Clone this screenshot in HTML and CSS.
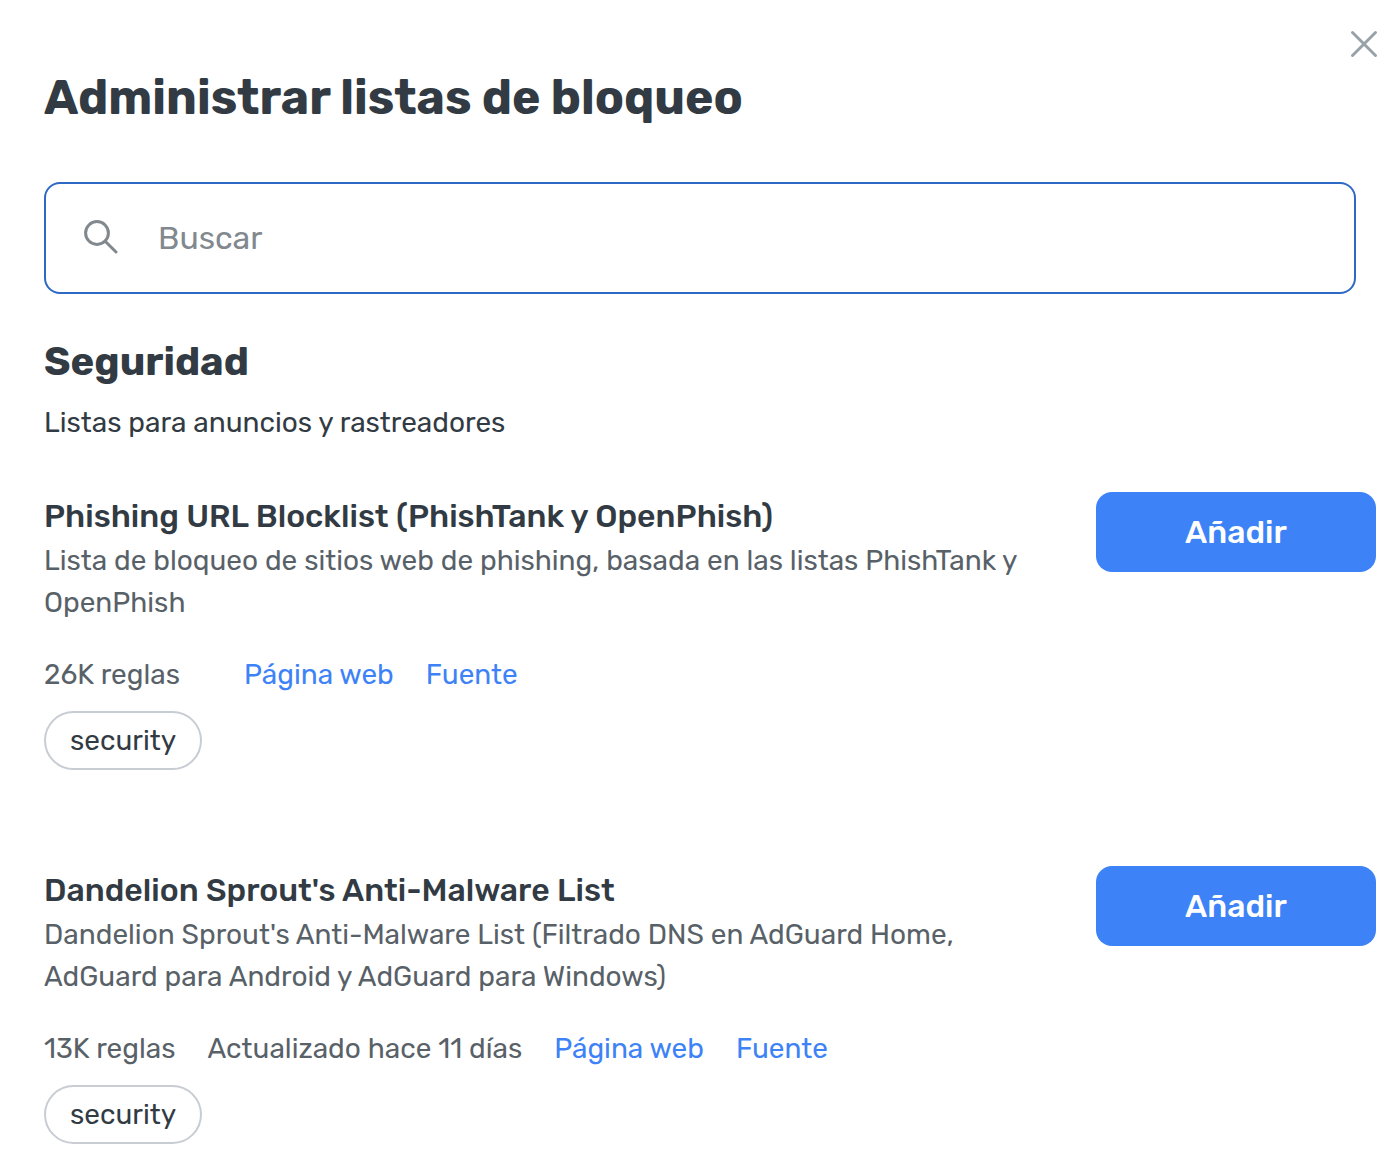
FILE: index.html
```html
<!DOCTYPE html>
<html lang="es">
<head>
    <meta charset="UTF-8">
    <meta name="viewport" content="width=device-width, initial-scale=1.0">
    <title>Administrar listas de bloqueo</title>
    <link rel="stylesheet" href="styles.css">
</head>
<body>
    <main class="modal">
        <button class="close" type="button" aria-label="Cerrar">
            <svg width="28" height="28" viewBox="0 0 28 28" fill="none" stroke="currentColor" stroke-width="3" stroke-linecap="round">
                <path d="M2.5 2.5l23 23M25.5 2.5l-23 23"/>
            </svg>
        </button>

        <h1>Administrar listas de bloqueo</h1>

        <div class="search">
            <svg width="36" height="36" viewBox="0 0 36 36" fill="none" stroke="currentColor" stroke-width="3" stroke-linecap="round">
                <circle cx="15" cy="13" r="11.4"/>
                <path d="M23.2 21.2L34 32"/>
            </svg>
            <input type="text" placeholder="Buscar" aria-label="Buscar">
        </div>

        <h2>Seguridad</h2>
        <p class="group-desc">Listas para anuncios y rastreadores</p>

        <section class="filter">
            <div class="filter-info">
                <h3>Phishing URL Blocklist (PhishTank y OpenPhish)</h3>
                <p class="filter-desc">Lista de bloqueo de sitios web de phishing, basada en las listas PhishTank y OpenPhish</p>
                <div class="filter-meta">
                    <span>26K reglas</span>
                    <span class="updated"></span>
                    <a href="#">Página web</a>
                    <a href="#">Fuente</a>
                </div>
                <span class="tag">security</span>
            </div>
            <button class="add" type="button">Añadir</button>
        </section>

        <section class="filter">
            <div class="filter-info">
                <h3>Dandelion Sprout's Anti-Malware List</h3>
                <p class="filter-desc">Dandelion Sprout's Anti-Malware List (Filtrado DNS en AdGuard Home, AdGuard para Android y AdGuard para Windows)</p>
                <div class="filter-meta">
                    <span>13K reglas</span>
                    <span class="updated">Actualizado hace 11 días</span>
                    <a href="#">Página web</a>
                    <a href="#">Fuente</a>
                </div>
                <span class="tag">security</span>
            </div>
            <button class="add" type="button">Añadir</button>
        </section>
    </main>
</body>
</html>
```
FILE: styles.css
```css
* {
    margin: 0;
    padding: 0;
    box-sizing: border-box;
}

body {
    background: #fff;
    color: #323b43;
    font-family: Rubik, Roboto, sans-serif;
    font-size: 28px;
    line-height: 42px;
}

.modal {
    position: relative;
    padding: 68px 20px 30px 44px;
}

.close {
    position: absolute;
    top: 30px;
    right: 18px;
    width: 28px;
    height: 28px;
    border: none;
    background: none;
    color: #98a2a9;
    cursor: pointer;
}

.close svg {
    display: block;
}

h1 {
    font-size: 48px;
    font-weight: 700;
    line-height: 60px;
    margin-bottom: 54px;
}

.search {
    display: flex;
    align-items: center;
    gap: 40px;
    height: 112px;
    margin-right: 20px;
    padding: 0 36px;
    border: 2px solid #2f69c6;
    border-radius: 16px;
    color: #81898f;
}

.search svg {
    flex-shrink: 0;
}

.search input {
    flex: 1;
    min-width: 0;
    height: 60px;
    border: none;
    outline: none;
    background: none;
    color: #323b43;
    font-family: inherit;
    font-size: 32px;
}

.search input::placeholder {
    color: #81898f;
    opacity: 1;
}

h2 {
    margin-top: 42px;
    font-size: 40px;
    font-weight: 700;
    line-height: 52px;
}

.group-desc {
    margin: 14px 0 48px;
}

.filter {
    display: flex;
    align-items: flex-start;
    justify-content: space-between;
    gap: 72px;
    margin-bottom: 96px;
}

.filter:last-child {
    margin-bottom: 0;
}

.filter-info {
    flex: 1;
    min-width: 0;
}

h3 {
    font-size: 32px;
    font-weight: 500;
    line-height: 48px;
}

.filter-desc {
    color: #586168;
}

.filter-meta {
    display: flex;
    flex-wrap: wrap;
    column-gap: 32px;
    margin: 30px 0 15px;
    color: #586168;
}

.filter-meta a {
    color: #3d82f7;
    text-decoration: none;
}

.filter-meta a:hover {
    text-decoration: underline;
}

.tag {
    display: block;
    width: fit-content;
    padding: 8px 24px;
    border: 2px solid #c8ccd3;
    border-radius: 30px;
    line-height: 39px;
}

.add {
    flex-shrink: 0;
    width: 280px;
    height: 80px;
    border: none;
    border-radius: 16px;
    background: #3d82f7;
    color: #fff;
    font-family: inherit;
    font-size: 32px;
    font-weight: 500;
    cursor: pointer;
}

.add:hover {
    background: #2f69c6;
}
```
